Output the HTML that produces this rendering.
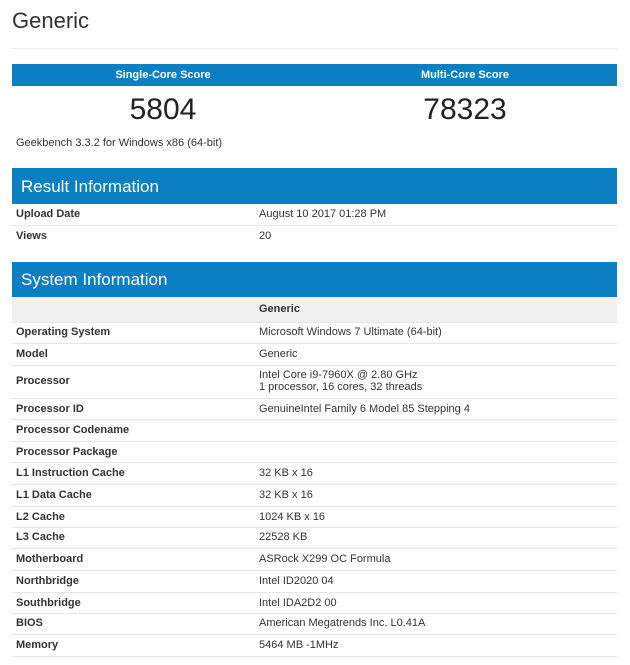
<!DOCTYPE html>
<html><head><style>
body{margin:0;background:#fff;font-family:"Liberation Sans",sans-serif;color:#333;width:630px;height:665px;overflow:hidden;position:relative}
.a{position:absolute}
.blue{background:#0a7fc2;color:#fff}
.lbl{left:16px;font-size:11px;font-weight:bold;color:#333}
.val{left:259px;font-size:11px;color:#333}
.ln{left:12px;width:605px;height:1px;background:#e6e6e6}
</style></head><body>
<div class="a" style="left:12px;top:8px;font-size:22px;color:#333">Generic</div>
<div class="a ln" style="top:48px;background:#eee"></div>
<div class="a blue" style="left:12px;top:64px;width:605px;height:22px"></div>
<div class="a" style="left:12px;top:69px;width:302px;text-align:center;color:#fff;font-size:11px;font-weight:bold">Single-Core Score</div>
<div class="a" style="left:314px;top:69px;width:302px;text-align:center;color:#fff;font-size:11px;font-weight:bold">Multi-Core Score</div>
<div class="a" style="left:12px;top:93px;width:302px;text-align:center;font-size:30px;color:#222">5804</div>
<div class="a" style="left:314px;top:93px;width:302px;text-align:center;font-size:30px;color:#222">78323</div>
<div class="a" style="left:16px;top:137px;font-size:11px">Geekbench 3.3.2 for Windows x86 (64-bit)</div>
<div class="a blue" style="left:12px;top:168px;width:605px;height:36px"><div style="padding:9px 0 0 9px;font-size:17px">Result Information</div></div>
<div class="a lbl" style="top:208px">Upload Date</div><div class="a val" style="top:208px">August 10 2017 01:28 PM</div>
<div class="a ln" style="top:225px"></div>
<div class="a lbl" style="top:230px">Views</div><div class="a val" style="top:230px">20</div>
<div class="a blue" style="left:12px;top:262px;width:605px;height:35px"><div style="padding:8px 0 0 9px;font-size:17px">System Information</div></div>
<div class="a" style="left:12px;top:297px;width:605px;height:25px;background:#f0f0f0"></div>
<div class="a val" style="top:303px;font-weight:bold">Generic</div>
<div class="a ln" style="top:322px"></div>
<div class="a lbl" style="top:326px">Operating System</div><div class="a val" style="top:326px">Microsoft Windows 7 Ultimate (64-bit)</div>
<div class="a ln" style="top:343px"></div>
<div class="a lbl" style="top:348px">Model</div><div class="a val" style="top:348px">Generic</div>
<div class="a ln" style="top:365px"></div>
<div class="a lbl" style="top:375px">Processor</div><div class="a val" style="top:369px;line-height:12px">Intel Core i9-7960X @ 2.80 GHz<br>1 processor, 16 cores, 32 threads</div>
<div class="a ln" style="top:398px"></div>
<div class="a lbl" style="top:403px">Processor ID</div><div class="a val" style="top:403px">GenuineIntel Family 6 Model 85 Stepping 4</div>
<div class="a ln" style="top:419px"></div>
<div class="a lbl" style="top:424px">Processor Codename</div>
<div class="a ln" style="top:441px"></div>
<div class="a lbl" style="top:446px">Processor Package</div>
<div class="a ln" style="top:462px"></div>
<div class="a lbl" style="top:467px">L1 Instruction Cache</div><div class="a val" style="top:467px">32 KB x 16</div>
<div class="a ln" style="top:484px"></div>
<div class="a lbl" style="top:489px">L1 Data Cache</div><div class="a val" style="top:489px">32 KB x 16</div>
<div class="a ln" style="top:506px"></div>
<div class="a lbl" style="top:511px">L2 Cache</div><div class="a val" style="top:511px">1024 KB x 16</div>
<div class="a ln" style="top:527px"></div>
<div class="a lbl" style="top:531px">L3 Cache</div><div class="a val" style="top:531px">22528 KB</div>
<div class="a ln" style="top:548px"></div>
<div class="a lbl" style="top:553px">Motherboard</div><div class="a val" style="top:553px">ASRock X299 OC Formula</div>
<div class="a ln" style="top:570px"></div>
<div class="a lbl" style="top:575px">Northbridge</div><div class="a val" style="top:575px">Intel ID2020 04</div>
<div class="a ln" style="top:592px"></div>
<div class="a lbl" style="top:597px">Southbridge</div><div class="a val" style="top:597px">Intel IDA2D2 00</div>
<div class="a ln" style="top:613px"></div>
<div class="a lbl" style="top:617px">BIOS</div><div class="a val" style="top:617px">American Megatrends Inc. L0.41A</div>
<div class="a ln" style="top:634px"></div>
<div class="a lbl" style="top:639px">Memory</div><div class="a val" style="top:639px">5464 MB -1MHz</div>
<div class="a ln" style="top:656px"></div>
</body></html>
